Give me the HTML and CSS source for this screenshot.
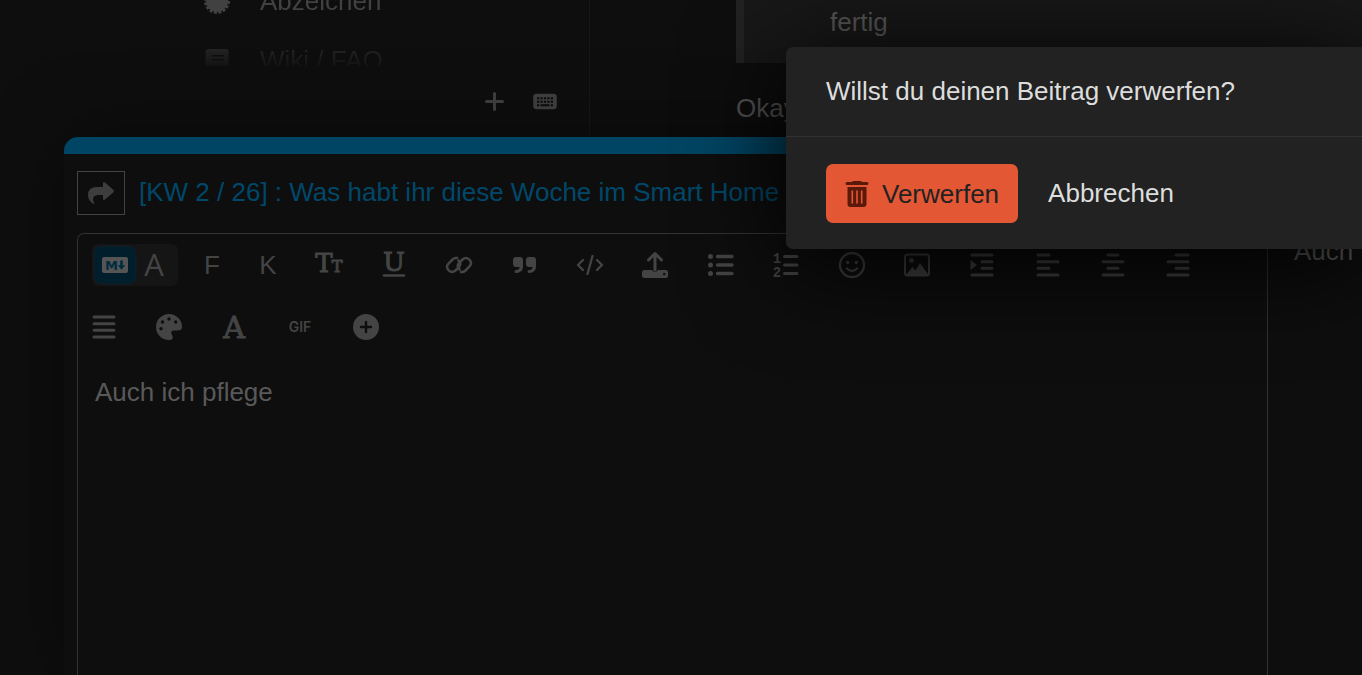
FILE: index.html
```
<!DOCTYPE html>
<html lang="de">
<head>
  <meta charset="UTF-8">
  <title>Beitrag verwerfen</title>
  <link rel="stylesheet" href="styles.css">
</head>
<body>

<div class="page">
  <nav class="sidebar">
    <ul class="sidebar-list">
      <li>
        <a href="#">
          <svg width="26" height="26" viewBox="0 0 26 26"><circle cx="13" cy="13" r="11" fill="currentColor"/><circle cx="13" cy="13" r="11" fill="none" stroke="currentColor" stroke-width="4" stroke-linejoin="round" stroke-dasharray="2.8 1.520"/></svg>
          Abzeichen
        </a>
      </li>
      <li>
        <a href="#">
          <svg width="26" height="26" viewBox="0 0 26 26"><path fill="currentColor" fill-rule="evenodd" d="M5 2h18q1.500 0 1.500 1.500v21H5q-3.500 0-3.500-3.500V5.500Q1.500 2 5 2zM8 8v1.500h12V8zM8 12v1.500h12V12z"/></svg>
          Wiki / FAQ
        </a>
      </li>
    </ul>
    <div class="sidebar-footer">
      <button type="button" aria-label="Hinzufügen">
        <svg width="24" height="24" viewBox="0 0 24 24"><path d="M12.500 4.500v16M4.500 12.500h16" stroke="currentColor" stroke-width="3" stroke-linecap="round"/></svg>
      </button>
      <button type="button" aria-label="Tastenkürzel">
        <svg width="24" height="24" viewBox="0 0 24 24"><rect x="1.500" y="6" width="21" height="13" rx="2" fill="none" stroke="currentColor" stroke-width="2.600"/><rect x="2" y="6" width="20" height="13" fill="currentColor"/><path d="M4 9.300h16M4 12.700h16" stroke="#0c0c0c" stroke-width="2" stroke-dasharray="2.200 1.250"/><path d="M4 16.200h2.200M7.500 16.200h9M17.800 16.200h2.200" stroke="#0c0c0c" stroke-width="2"/></svg>
      </button>
    </div>
  </nav>

  <main class="post">
    <blockquote>fertig</blockquote>
    <p>Okay</p>
  </main>
</div>

<section class="composer">
  <div class="composer-grip"></div>
  <div class="composer-title">
    <button type="button" class="reply-btn" aria-label="Antworten">
      <svg width="28" height="28" viewBox="0 0 28 28"><path fill="currentColor" d="M16 4.500q0-2.500 2-1l8.500 7.500q1.200 1 0 2.200L18 20.500q-2 1.500-2-1V16h-4.500Q6 16 6 20.500q0 1.800 1 3 1 1.500-.5 1.500Q1 21.500 1 16 1 8 10 8h6z"/></svg>
    </button>
    <a href="#">[KW 2 / 26] : Was habt ihr diese Woche im Smart Home</a>
  </div>

  <div class="composer-body">
    <div class="editor">
      <div class="toolbar">
        <div class="mode-switch">
          <button type="button" class="active" aria-label="Markdown">
            <svg width="28" height="20" viewBox="0 0 28 20"><rect x="1" y="2" width="26" height="16" rx="2" fill="#555"/><text x="4" y="15" class="md-letter">M</text><path d="M20.500 5.500v6" stroke="#002c40" stroke-width="2.600"/><path d="M16.800 10.200h7.400l-3.700 4.500z" fill="#002c40"/></svg>
          </button>
          <button type="button" aria-label="Rich Text">
            <svg width="28" height="36" viewBox="0 0 28 36"><text x="13" y="29" class="icon-sans">A</text></svg>
          </button>
        </div>
        <button type="button" class="letter-btn">F</button>
        <button type="button" class="letter-btn">K</button>
        <div class="icon-row">
          <button type="button" aria-label="Schriftgröße">
            <svg width="32" height="36" viewBox="0 0 32 36"><text x="11" y="25" class="icon-slab icon-slab-big">T</text><text x="24" y="25" class="icon-slab icon-slab-small">T</text></svg>
          </button>
          <button type="button" aria-label="Unterstrichen">
            <svg width="28" height="36" viewBox="0 0 28 36"><text x="14" y="24" class="icon-slab icon-slab-big">U</text><path d="M4 28.500h20" stroke="currentColor" stroke-width="2.600" stroke-linecap="round"/></svg>
          </button>
          <button type="button" aria-label="Link">
            <svg width="28" height="28" viewBox="0 0 28 28" fill="none" stroke="currentColor" stroke-width="2.500" stroke-linecap="round"><path d="M14.500 18.500q-3.500-3.500 0-7l3-3q3.500-3 6.800.2t.2 6.800l-4 4q-2 2-4.500 1.500"/><path d="M13.500 9.500q3.500 3.500 0 7l-3 3q-3.500 3-6.800-.2t-.2-6.800l4-4q2-2 4.500-1.500"/></svg>
          </button>
          <button type="button" aria-label="Zitat">
            <svg width="28" height="28" viewBox="0 0 28 28" fill="currentColor"><path id="quote-mark" d="M5 6h4q3 0 3 3v6.500q0 6.500-7 6.500-1.500 0-1.500-1.500T5 19q3.500 0 3.500-3H5q-3 0-3-3V9q0-3 3-3z"/><use href="#quote-mark" x="13"/></svg>
          </button>
          <button type="button" aria-label="Code">
            <svg width="28" height="28" viewBox="0 0 28 28" fill="none" stroke="currentColor" stroke-width="2.300" stroke-linecap="round" stroke-linejoin="round"><path d="M7 9l-5 5 5 5M21 9l5 5-5 5M16.500 5l-5 18"/></svg>
          </button>
          <button type="button" aria-label="Hochladen">
            <svg width="28" height="28" viewBox="0 0 28 28"><path fill="currentColor" fill-rule="evenodd" d="M3.500 19h7.500q3 4 6 0h7.500q2.500 0 2.500 2.500v3q0 2.500-2.500 2.500h-21Q1 27 1 24.500v-3Q1 19 3.500 19zM23.200 21.700a1.300 1.300 0 1 0 .1 0z"/><path d="M14 19V3M7.500 9L14 2.500 20.500 9" fill="none" stroke="currentColor" stroke-width="3" stroke-linecap="round" stroke-linejoin="round"/></svg>
          </button>
          <button type="button" aria-label="Aufzählung">
            <svg width="28" height="28" viewBox="0 0 28 28"><g fill="currentColor"><circle cx="3.500" cy="5.500" r="2.500"/><circle cx="3.500" cy="14" r="2.500"/><circle cx="3.500" cy="22.500" r="2.500"/></g><path d="M10.500 5.500h14.500M10.500 14h14.500M10.500 22.500h14.500" stroke="currentColor" stroke-width="3.400" stroke-linecap="round"/></svg>
          </button>
          <button type="button" aria-label="Nummerierte Liste">
            <svg width="28" height="32" viewBox="0 0 28 32"><text x="5" y="14" class="icon-number">1</text><text x="5" y="28" class="icon-number">2</text><path d="M12.500 7.500h12.500M12.500 16h12.500M12.500 24.500h12.500" stroke="currentColor" stroke-width="3" stroke-linecap="round"/></svg>
          </button>
          <button type="button" aria-label="Emoji">
            <svg width="28" height="28" viewBox="0 0 28 28"><circle cx="14" cy="14" r="12" fill="none" stroke="currentColor" stroke-width="2.300"/><circle cx="9.700" cy="11.500" r="1.700" fill="currentColor"/><circle cx="18.300" cy="11.500" r="1.700" fill="currentColor"/><path d="M9 17.500q5 5 10 0" fill="none" stroke="currentColor" stroke-width="2.400" stroke-linecap="round"/></svg>
          </button>
          <button type="button" aria-label="Bild">
            <svg width="28" height="28" viewBox="0 0 28 28"><rect x="2" y="3.500" width="24" height="21" rx="2.500" fill="none" stroke="currentColor" stroke-width="2"/><circle cx="8.500" cy="9.500" r="2.300" fill="currentColor"/><path d="M3 24l6.500-8 3 3.500 4.500-7.500 8.500 12z" fill="currentColor"/></svg>
          </button>
          <button type="button" aria-label="Einrücken">
            <svg width="28" height="28" viewBox="0 0 28 28"><path d="M4 4h20M14 10.700h10M14 17.300h10M4 24h20" stroke="currentColor" stroke-width="3" stroke-linecap="round"/><path d="M2.500 9v10l6.500-5z" fill="currentColor"/></svg>
          </button>
          <button type="button" aria-label="Linksbündig">
            <svg width="28" height="28" viewBox="0 0 28 28"><path d="M4 4h11M4 10.700h20M4 17.300h11M4 24h20" stroke="currentColor" stroke-width="3" stroke-linecap="round"/></svg>
          </button>
          <button type="button" aria-label="Zentriert">
            <svg width="28" height="28" viewBox="0 0 28 28"><path d="M9 4h10M4 10.700h20M9 17.300h10M4 24h20" stroke="currentColor" stroke-width="3" stroke-linecap="round"/></svg>
          </button>
          <button type="button" aria-label="Rechtsbündig">
            <svg width="28" height="28" viewBox="0 0 28 28"><path d="M12 4h12M4 10.700h20M12 17.300h12M4 24h20" stroke="currentColor" stroke-width="3" stroke-linecap="round"/></svg>
          </button>
        </div>
      </div>

      <div class="toolbar toolbar-second">
        <button type="button" aria-label="Blocksatz">
          <svg width="28" height="28" viewBox="0 0 28 28"><path d="M4 4h20M4 10.700h20M4 17.300h20M4 24h20" stroke="currentColor" stroke-width="3" stroke-linecap="round"/></svg>
        </button>
        <button type="button" aria-label="Farbe">
          <svg width="28" height="28" viewBox="0 0 28 28"><path fill="currentColor" d="M27 14v.5q-.2 3-4.500 3h-4q-2.300 0-2.300 2.300 0 .8.800 2.200.7 1.300.7 2.200 0 2.600-2.700 2.800H14A13 13 0 1 1 27 14z"/><g fill="#0e0e0e"><circle cx="6" cy="15.700" r="1.700"/><circle cx="7.500" cy="9" r="1.700"/><circle cx="14" cy="6" r="1.700"/><circle cx="20.700" cy="9" r="1.700"/></g></svg>
        </button>
        <button type="button" aria-label="Schriftart">
          <svg width="28" height="36" viewBox="0 0 28 36"><text x="14" y="29" class="icon-slab icon-slab-font">A</text></svg>
        </button>
        <button type="button" class="gif-btn">GIF</button>
        <button type="button" aria-label="Mehr">
          <svg width="28" height="28" viewBox="0 0 28 28"><circle cx="14" cy="14" r="13" fill="currentColor"/><path d="M14 9v10M9 14h10" stroke="#0e0e0e" stroke-width="2.400" stroke-linecap="round"/></svg>
        </button>
      </div>

      <textarea aria-label="Beitrag">Auch ich pflege</textarea>
    </div>
    <div class="preview">Auch</div>
  </div>
</section>

<div class="dialog" role="dialog" aria-labelledby="dialogText">
  <div class="dialog-body" id="dialogText">Willst du deinen Beitrag verwerfen?</div>
  <div class="dialog-footer">
    <button type="button" class="btn-danger">
      <svg width="24" height="28" viewBox="0 0 24 28"><path fill="currentColor" fill-rule="evenodd" d="M7 2q.5-1 1.500-1h7q1 0 1.500 1h5q1.500 0 1.500 1.500T22 5H2Q.5 5 .5 3.500T2 2zM2.500 7h19v17q0 3-3 3h-13q-3 0-3-3zM6.500 10.500v13h1.600v-13zM11.200 10.500v13h1.600v-13zM15.900 10.500v13h1.600v-13z"/></svg>
      Verwerfen
    </button>
    <button type="button" class="btn-cancel">Abbrechen</button>
  </div>
</div>

</body>
</html>
```
FILE: styles.css
```
* {
  box-sizing: border-box;
}

body {
  margin: 0;
  height: 100vh;
  overflow: hidden;
  position: relative;
  background-color: #0e0e0e;
  color: #595959;
  font-family: "Liberation Sans", Arial, sans-serif;
  font-size: 26px;
  line-height: 36px;
}

button {
  display: flex;
  align-items: center;
  justify-content: center;
  padding: 0;
  border: none;
  background: none;
  color: inherit;
  font: inherit;
}

a {
  color: inherit;
  text-decoration: none;
}

svg {
  flex: none;
}

/* page behind the composer */
.page {
  display: flex;
  height: 100%;
}

.sidebar {
  width: 590px;
  flex: none;
  border-right: 1px solid #171717;
  color: #414141;
}

.sidebar-list {
  list-style: none;
  height: 66px;
  margin: 0;
  padding: 0 0 0 204px;
  overflow: hidden;
  mask-image: linear-gradient(#000 20px, transparent 72px);
}

.sidebar-list li:first-child {
  margin-top: -29px;
}

.sidebar-list a {
  display: flex;
  align-items: center;
  gap: 30px;
  height: 59px;
}

.sidebar-footer {
  display: flex;
  justify-content: flex-end;
  gap: 27px;
  padding: 23px 32px 0 0;
}

.post {
  flex: 1;
  padding-left: 146px;
}

.post blockquote {
  margin: 0;
  padding: 4px 0 23px 86px;
  border-left: 8px solid #222;
  background-color: #181818;
}

.post p {
  margin: 27px 0;
}

/* composer */
.composer {
  position: absolute;
  top: 137px;
  left: 64px;
  right: 0;
  bottom: 0;
  display: flex;
  flex-direction: column;
  background-color: #0e0e0e;
  border-top-left-radius: 14px;
  box-shadow: 0 0 80px rgba(0, 0, 0, 0.4);
}

.composer-grip {
  height: 17px;
  flex: none;
  background-color: #004563;
  border-top-left-radius: 14px;
}

.composer-title {
  display: flex;
  gap: 14px;
  padding: 17px 13px 18px;
  color: #00486a;
  line-height: 42px;
  white-space: nowrap;
}

.reply-btn {
  width: 48px;
  height: 44px;
  border: 1px solid #434343;
  color: #3d3d3d;
}

.composer-body {
  flex: 1;
  display: grid;
  grid-template-columns: 1fr 94px;
  padding-left: 13px;
}

.editor {
  display: flex;
  flex-direction: column;
  border: 1px solid #333;
  border-bottom: none;
  border-radius: 7px 7px 0 0;
}

.toolbar {
  display: flex;
  align-items: center;
  height: 62px;
  padding: 0 56px 0 14px;
  color: #444;
}

.mode-switch {
  display: flex;
  align-items: center;
  width: 86px;
  height: 42px;
  margin-right: 6px;
  padding: 0 3px;
  border-radius: 6px;
  background-color: #151515;
}

.mode-switch button {
  width: 40px;
  height: 36px;
}

.mode-switch .active {
  border-radius: 6px;
  background-color: #001e2c;
  box-shadow: 0 0 3px #003048;
}

.letter-btn {
  width: 56px;
}

.icon-row {
  flex: 1;
  display: grid;
  grid-template-columns: repeat(14, 1fr);
}

.icon-row button {
  width: 100%;
}

.toolbar-second {
  padding-left: 12px;
  gap: 37px;
}

.gif-btn {
  width: 30px;
  font-family: Inter, sans-serif;
  font-size: 14px;
  font-weight: 600;
}

svg text {
  fill: currentColor;
}

svg .md-letter {
  fill: #002c40;
  font: bold 13px "DejaVu Sans", sans-serif;
}

.icon-sans {
  font: 500 31px "Open Sans", sans-serif;
  text-anchor: middle;
}

.icon-slab {
  font-family: "DejaVu Serif", serif;
  text-anchor: middle;
  stroke: currentColor;
}

.icon-slab-big {
  font-size: 26px;
}

.icon-slab-small {
  font-size: 16px;
}

.icon-slab-font {
  font-size: 30px;
}

.icon-number {
  font: bold 14px "Liberation Mono", monospace;
  text-anchor: middle;
}

textarea {
  flex: 1;
  width: 100%;
  padding: 16px 17px;
  border: none;
  outline: none;
  resize: none;
  background: none;
  color: inherit;
  font: inherit;
}

.preview {
  padding-left: 26px;
  overflow: hidden;
}

/* dialog */
.dialog {
  position: absolute;
  top: 47px;
  left: 786px;
  right: 0;
  background-color: #222;
  color: #ddd;
  border-radius: 7px 0 0 7px;
  box-shadow: 0 14px 100px #000;
}

.dialog-body {
  padding: 26px 40px 27px;
  border-bottom: 1px solid #323232;
}

.dialog-footer {
  display: flex;
  gap: 30px;
  padding: 27px 40px 26px;
}

.dialog-footer button {
  height: 58px;
}

.dialog-footer .btn-danger {
  height: 59px;
  gap: 13px;
  padding: 0 19px;
  border-radius: 7px;
  background-color: #e45735;
  color: #222;
}

.btn-danger svg {
  color: #5b1a09;
}
```
